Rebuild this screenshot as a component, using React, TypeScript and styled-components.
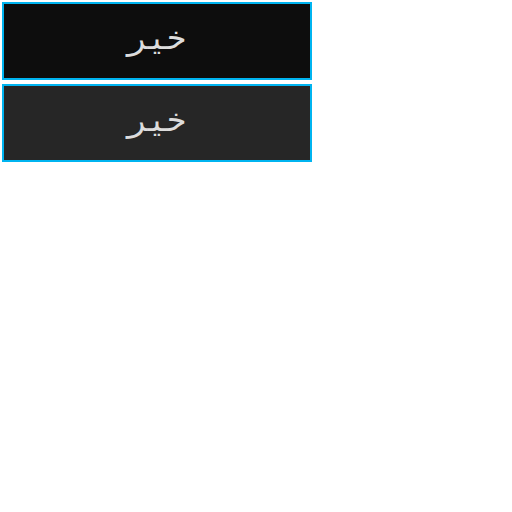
import styled, { createGlobalStyle } from "styled-components";

const Global = createGlobalStyle`
  body {
    margin: 0;
    background: #ffffff;
    font-family: "DejaVu Sans Mono", monospace;
  }
`;

const Stack = styled.div`
  display: flex;
  flex-direction: column;
  align-items: flex-start;
`;

const Tile = styled.div<{ $shade: string }>`
  box-sizing: border-box;
  width: 310px;
  height: 78px;
  margin: 2px;
  padding-bottom: 6px;
  border: 2px solid #00b4f0;
  background: ${(p) => p.$shade};
  display: flex;
  align-items: center;
  justify-content: center;
  color: #dcdcdc;
  font-size: 32px;
  direction: rtl;
`;

export default function App() {
  return (
    <>
      <Global />
      <Stack>
        <Tile $shade="#0d0d0d">خير</Tile>
        <Tile $shade="#262626">خير</Tile>
      </Stack>
    </>
  );
}
